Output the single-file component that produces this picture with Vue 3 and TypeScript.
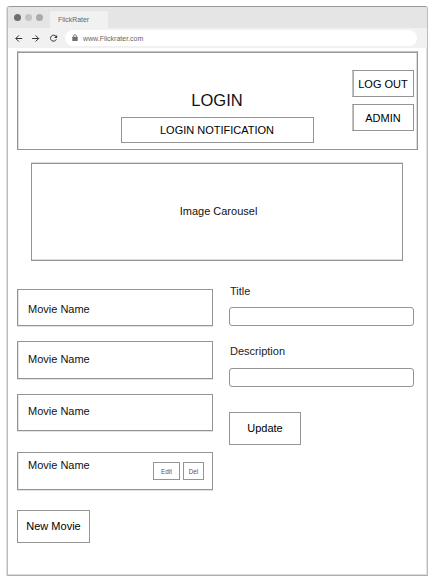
<script setup lang="ts">
interface Movie {
  id: number
  name: string
  editable: boolean
}

const movies: Movie[] = [
  { id: 1, name: 'Movie Name', editable: false },
  { id: 2, name: 'Movie Name', editable: false },
  { id: 3, name: 'Movie Name', editable: false },
  { id: 4, name: 'Movie Name', editable: true },
]
</script>

<template>
  <div class="window">
    <div class="tabs">
      <i class="dot dark"></i>
      <i class="dot light"></i>
      <i class="dot mid"></i>
      <div class="tab">FlickRater</div>
    </div>
    <div class="toolbar">
      <svg class="nav" viewBox="0 0 52 20" fill="none" stroke="#333" stroke-width="1">
        <path d="M15.2 10.5H8.8M11.9 7.4L8.8 10.5l3.1 3.1" />
        <path d="M25.2 10.5h6.4M28.6 7.4l3.1 3.1-3.1 3.1" />
        <path d="M49 8.5a3 3 0 1 0 .3 2.8" />
        <path d="M50.1 6.9v3h-3z" fill="#333" stroke="none" />
      </svg>
      <div class="address">
        <svg class="lock" viewBox="0 0 6 8">
          <path d="M1.5 3.5V2.2a1.5 1.5 0 0 1 3 0v1.3" fill="none" stroke="#707070" stroke-width=".8" />
          <rect x=".3" y="2.8" width="5.4" height="4.2" rx=".5" fill="#707070" />
        </svg>
        <span>www.Flickrater.com</span>
      </div>
    </div>

    <main class="page">
      <header class="box banner">
        <div class="login">
          <h1>LOGIN</h1>
          <div class="box notification">LOGIN NOTIFICATION</div>
        </div>
        <div class="account">
          <button class="box">LOG OUT</button>
          <button class="box">ADMIN</button>
        </div>
      </header>

      <section class="box carousel">Image Carousel</section>

      <div class="columns">
        <section class="movies">
          <article v-for="movie in movies" :key="movie.id" class="box movie">
            <span class="name">{{ movie.name }}</span>
            <div v-if="movie.editable" class="actions">
              <button class="box edit">Edit</button>
              <button class="box del">Del</button>
            </div>
          </article>
          <button class="box new">New Movie</button>
        </section>
        <form class="editor" @submit.prevent>
          <label for="title">Title</label>
          <input id="title" class="box" type="text" />
          <label for="description">Description</label>
          <input id="description" class="box" type="text" />
          <button class="box update">Update</button>
        </form>
      </div>
    </main>
  </div>
</template>

<style>
body {
  background: #fff;
}
</style>

<style scoped>
* {
  box-sizing: border-box;
}

.window {
  width: 421px;
  height: 570px;
  margin: 6px 0 0 7px;
  overflow: hidden;
  border: 1px solid #bcbcbc;
  border-top-color: #999;
  border-bottom-color: #adadad;
  border-radius: 3px 3px 0 0;
  box-shadow: -1px 0 #dedede, inset 0 -1px #ddd, inset -1px 0 #e2e2e2;
  font: 11px/13px "Liberation Sans", Arial, sans-serif;
  color: #222;
}

.tabs {
  display: flex;
  height: 21px;
  padding: 4px 0 0 6px;
  background: #e5e5e5;
}

.dot {
  width: 7px;
  height: 7px;
  margin: 3px 4px 0 0;
  border-radius: 50%;
}

.dark {
  background: #6d6d6d;
}

.light {
  background: #c3c3c3;
}

.mid {
  background: #aaa;
}

.tab {
  width: 58px;
  height: 17px;
  margin-left: 3px;
  padding-left: 8px;
  border-radius: 2px 2px 0 0;
  background: #f1f1f1;
  color: #666;
  font-size: 6.9px;
  line-height: 18px;
}

.toolbar {
  display: flex;
  height: 20px;
  padding-top: 2px;
  background: #f1f1f1;
}

.nav {
  width: 52px;
  height: 20px;
  margin: -2px 0 0 -1px;
}

.address {
  display: flex;
  align-items: center;
  width: 352px;
  height: 16px;
  margin-left: 6px;
  padding-left: 7px;
  border-radius: 8px;
  background: #fff;
  color: #666;
  font-size: 7px;
}

.lock {
  width: 6px;
  height: 8px;
  margin-right: 5px;
}

.page {
  padding: 3px 9px 0;
}

.box {
  display: flex;
  align-items: center;
  justify-content: center;
  margin: 0;
  padding: 0;
  border: 1px solid #949494;
  border-radius: 0;
  background: #fff;
  font: inherit;
  color: #111;
}

.banner {
  align-items: flex-start;
  justify-content: flex-end;
  width: 401px;
  height: 99px;
  border-top-color: #c4c4c4;
  box-shadow: inset 0 1px #999, inset -1px 0 #ddd, inset 1px 0 #ddd;
}

.login {
  display: flex;
  flex-direction: column;
  align-items: center;
  padding-top: 38px;
}

h1 {
  margin: 0 1px 0 0;
  font-size: 16.5px;
  font-weight: 400;
  line-height: 20px;
}

.notification {
  width: 193px;
  height: 26px;
  margin-top: 7px;
  padding-right: 1px;
  color: #000;
}

.account {
  display: flex;
  flex-direction: column;
  gap: 7px;
  margin: 18px 3px 0 38px;
}

.account .box {
  width: 62px;
  height: 27px;
  padding-top: 1px;
  color: #000;
  border-color: #949494 #949494 #949494 #c0c0c0;
  box-shadow: inset 1px 0 #aaa;
}

.carousel {
  width: 372px;
  height: 98px;
  margin: 13px 0 0 14px;
  padding: 0 0 2px 3px;
  box-shadow: 0 -1px #ddd, 0 -1px #ddd inset;
}

.columns {
  display: flex;
  gap: 16px;
  margin-top: 28px;
}

.movies {
  width: 196px;
}

.movie {
  align-items: flex-start;
  justify-content: flex-start;
  height: 37px;
  padding: 13px 0 0 10px;
  box-shadow: inset 1px 0 #e3e3e3, 0 1px #e3e3e3;
}

.movie:nth-child(2) {
  margin-top: 15px;
  padding-top: 11px;
  height: 38px;
}

.movie:nth-child(3) {
  margin-top: 15px;
  padding-top: 10px;
}

.movie:nth-child(4) {
  margin-top: 21px;
  padding-top: 6px;
  height: 38px;
}

.name {
  flex: 1;
}

.actions {
  display: flex;
  gap: 3px;
  margin: 3px 8px 0 0;
  font-size: 6.3px;
  line-height: 7px;
}

.edit,
.del {
  height: 18px;
  color: #555;
}

.edit {
  width: 27px;
}

.del {
  width: 21px;
}

.new,
.update {
  width: 73px;
  height: 33px;
  color: #000;
}

.new {
  margin-top: 20px;
}

.editor {
  display: flex;
  flex-direction: column;
  width: 185px;
  margin-top: -4px;
}

.editor label {
  padding-left: 1px;
}

.editor input {
  width: 185px;
  height: 19px;
  border-radius: 3px;
  margin: 9px 0 19px;
  outline: none;
}

#description {
  margin-top: 10px;
}

.update {
  width: 72px;
  margin-top: 6px;
}
</style>
